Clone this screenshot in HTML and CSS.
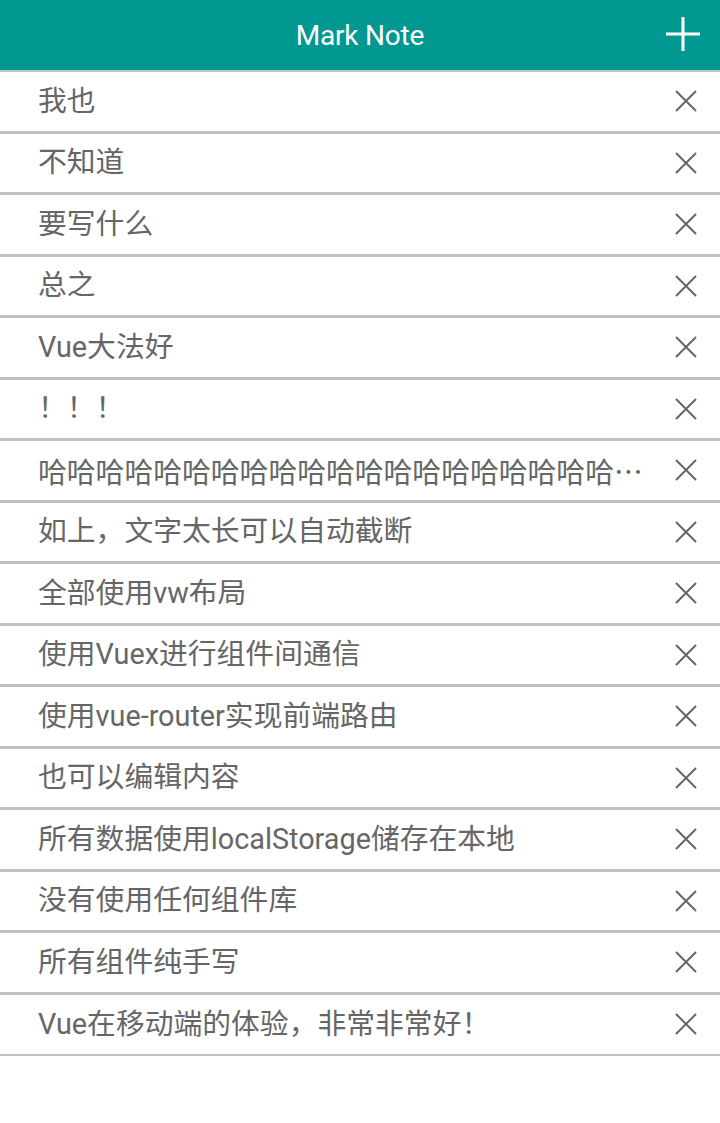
FILE: index.html
```html
<!DOCTYPE html>
<html lang="zh">
<head>
<meta charset="utf-8">
<title>Mark Note</title>
<link rel="stylesheet" href="styles.css">
</head>
<body>
<header class="bar">
  <h1 class="title">Mark Note</h1>
  <button class="add" aria-label="add">
    <svg width="36" height="36" viewBox="0 0 36 36"><path d="M18 1V35M1 18H35" stroke="#fff" stroke-width="3" fill="none"/></svg>
  </button>
</header>
<ul class="list">
  <li class="item"><span class="text">我也</span><span class="del"><svg width="24" height="24" viewBox="0 0 24 24"><path d="M2 2L22 22M22 2L2 22" stroke="#666" stroke-width="2" fill="none"/></svg></span></li>
  <li class="item"><span class="text">不知道</span><span class="del"><svg width="24" height="24" viewBox="0 0 24 24"><path d="M2 2L22 22M22 2L2 22" stroke="#666" stroke-width="2" fill="none"/></svg></span></li>
  <li class="item"><span class="text">要写什么</span><span class="del"><svg width="24" height="24" viewBox="0 0 24 24"><path d="M2 2L22 22M22 2L2 22" stroke="#666" stroke-width="2" fill="none"/></svg></span></li>
  <li class="item"><span class="text">总之</span><span class="del"><svg width="24" height="24" viewBox="0 0 24 24"><path d="M2 2L22 22M22 2L2 22" stroke="#666" stroke-width="2" fill="none"/></svg></span></li>
  <li class="item"><span class="text">Vue大法好</span><span class="del"><svg width="24" height="24" viewBox="0 0 24 24"><path d="M2 2L22 22M22 2L2 22" stroke="#666" stroke-width="2" fill="none"/></svg></span></li>
  <li class="item"><span class="text">！！！</span><span class="del"><svg width="24" height="24" viewBox="0 0 24 24"><path d="M2 2L22 22M22 2L2 22" stroke="#666" stroke-width="2" fill="none"/></svg></span></li>
  <li class="item"><span class="text text-cjk">哈哈哈哈哈哈哈哈哈哈哈哈哈哈哈哈哈哈哈哈哈哈哈哈哈哈哈哈哈哈</span><span class="del"><svg width="24" height="24" viewBox="0 0 24 24"><path d="M2 2L22 22M22 2L2 22" stroke="#666" stroke-width="2" fill="none"/></svg></span></li>
  <li class="item"><span class="text">如上，文字太长可以自动截断</span><span class="del"><svg width="24" height="24" viewBox="0 0 24 24"><path d="M2 2L22 22M22 2L2 22" stroke="#666" stroke-width="2" fill="none"/></svg></span></li>
  <li class="item"><span class="text">全部使用vw布局</span><span class="del"><svg width="24" height="24" viewBox="0 0 24 24"><path d="M2 2L22 22M22 2L2 22" stroke="#666" stroke-width="2" fill="none"/></svg></span></li>
  <li class="item"><span class="text">使用Vuex进行组件间通信</span><span class="del"><svg width="24" height="24" viewBox="0 0 24 24"><path d="M2 2L22 22M22 2L2 22" stroke="#666" stroke-width="2" fill="none"/></svg></span></li>
  <li class="item"><span class="text">使用vue-router实现前端路由</span><span class="del"><svg width="24" height="24" viewBox="0 0 24 24"><path d="M2 2L22 22M22 2L2 22" stroke="#666" stroke-width="2" fill="none"/></svg></span></li>
  <li class="item"><span class="text">也可以编辑内容</span><span class="del"><svg width="24" height="24" viewBox="0 0 24 24"><path d="M2 2L22 22M22 2L2 22" stroke="#666" stroke-width="2" fill="none"/></svg></span></li>
  <li class="item"><span class="text">所有数据使用localStorage储存在本地</span><span class="del"><svg width="24" height="24" viewBox="0 0 24 24"><path d="M2 2L22 22M22 2L2 22" stroke="#666" stroke-width="2" fill="none"/></svg></span></li>
  <li class="item"><span class="text">没有使用任何组件库</span><span class="del"><svg width="24" height="24" viewBox="0 0 24 24"><path d="M2 2L22 22M22 2L2 22" stroke="#666" stroke-width="2" fill="none"/></svg></span></li>
  <li class="item"><span class="text">所有组件纯手写</span><span class="del"><svg width="24" height="24" viewBox="0 0 24 24"><path d="M2 2L22 22M22 2L2 22" stroke="#666" stroke-width="2" fill="none"/></svg></span></li>
  <li class="item"><span class="text">Vue在移动端的体验，非常非常好！</span><span class="del"><svg width="24" height="24" viewBox="0 0 24 24"><path d="M2 2L22 22M22 2L2 22" stroke="#666" stroke-width="2" fill="none"/></svg></span></li>
</ul>
</body>
</html>
```
FILE: styles.css
```css
* { box-sizing: border-box; }
html, body {
  margin: 0;
  padding: 0;
  background: #fff;
  font-family: Roboto, "Noto Sans CJK SC", sans-serif;
}
.bar {
  height: 72px;
  background: #009890;
  border-bottom: 2px solid #bfc4c4;
  display: flex;
  align-items: center;
  justify-content: center;
  position: relative;
}
.title {
  margin: 0;
  color: #fff;
  font-size: 28px;
  font-weight: 400;
  line-height: 1;
  padding-top: 2px;
  letter-spacing: -0.2px;
}
.add {
  position: absolute;
  right: 19px;
  top: 16px;
  background: none;
  border: 0;
  padding: 0;
  width: 36px;
  height: 36px;
  display: block;
}
.add svg { display: block; }
.list {
  list-style: none;
  margin: 0;
  padding: 0;
}
.item {
  height: 61.5px;
  border-bottom: 3px solid #c0c0c0;
  display: flex;
  align-items: center;
  padding: 0 22px 0 38px;
  color: #666;
  font-size: 28.8px;
}
.item:last-child { border-bottom-width: 2px; }
.text {
  flex: 1;
  min-width: 0;
  white-space: nowrap;
  overflow: hidden;
  text-overflow: ellipsis;
  padding-right: 34px;
  line-height: 1.3;
}
.text-cjk {
  font-family: "Noto Sans CJK SC", sans-serif;
  padding-right: 30px;
}
.del {
  width: 24px;
  height: 24px;
  flex: none;
  display: block;
}
.del svg { display: block; }
```
